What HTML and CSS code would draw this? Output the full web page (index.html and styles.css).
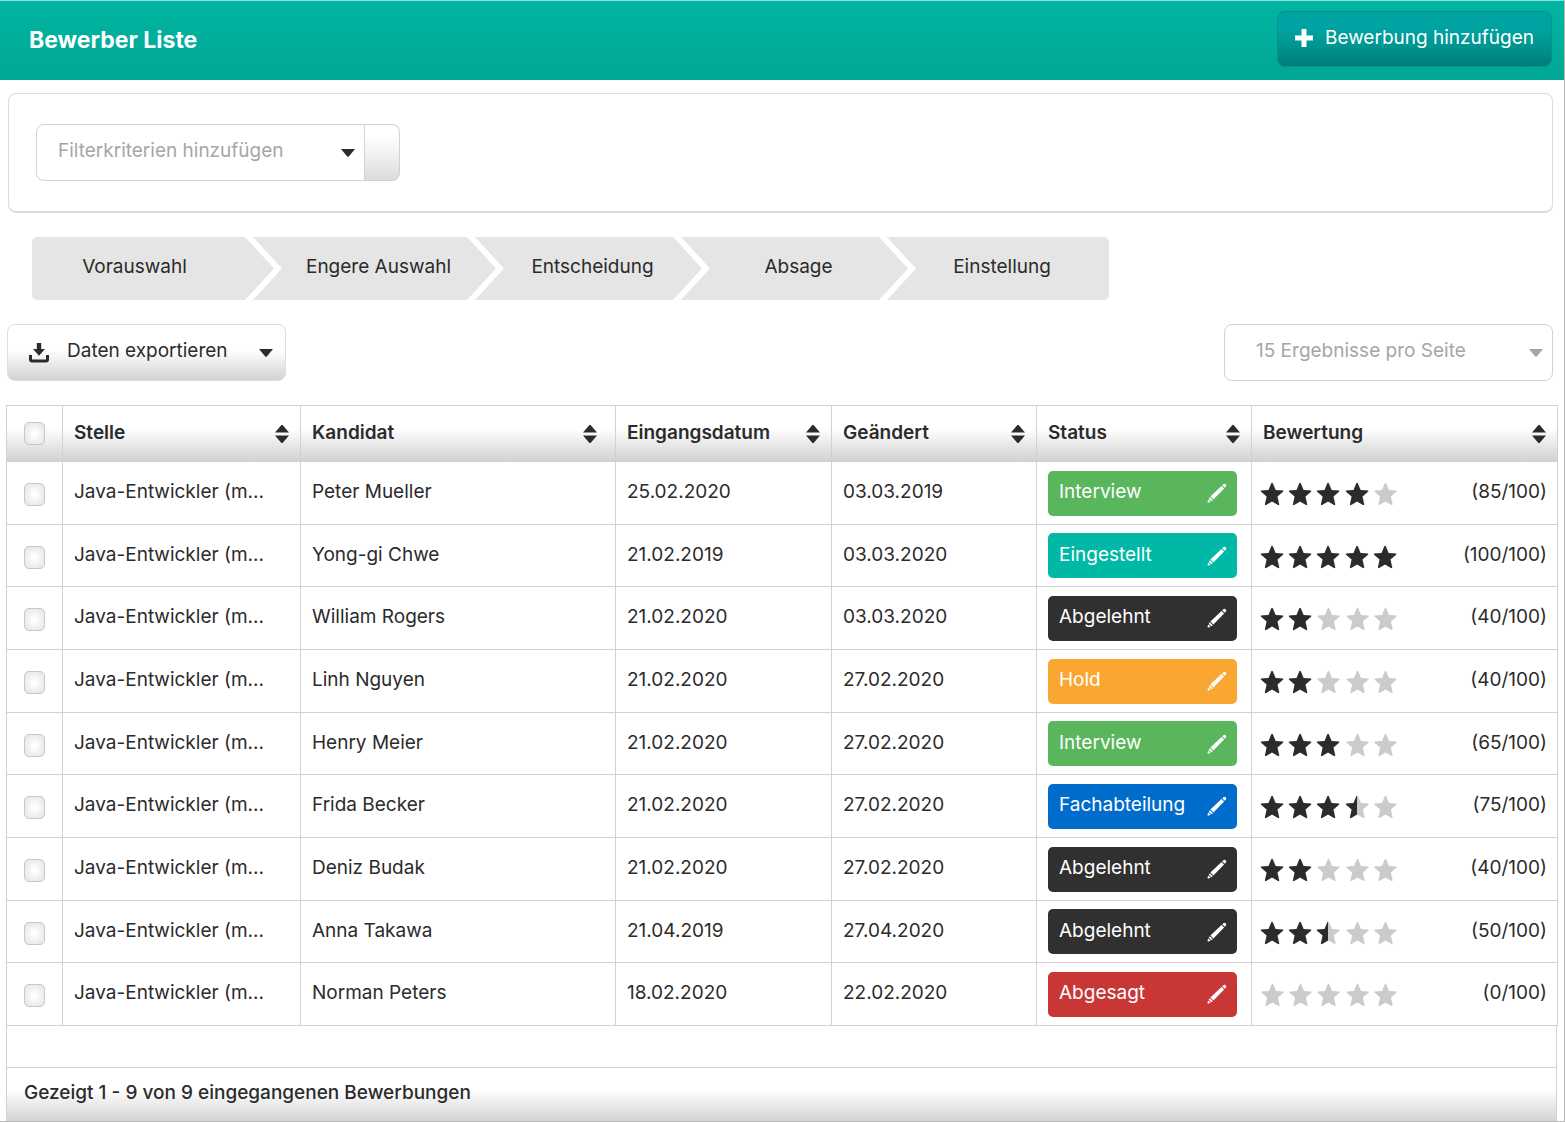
FILE: index.html
```html
<!DOCTYPE html>
<html lang="de">
<head>
<meta charset="utf-8">
<title>Bewerber Liste</title>
<link rel="stylesheet" href="styles.css">
</head>
<body>
<svg class="sprite" aria-hidden="true">
  <symbol id="caret" viewBox="0 0 14 8"><path d="M0 0H14L8 7.300Q7 8.300 6 7.300Z"/></symbol>
  <symbol id="sort" viewBox="0 0 14 20"><path d="M6.200 1.200Q7 .4 7.800 1.200L14 8.400H0ZM7.800 18.800Q7 19.600 6.200 18.800L0 11.600H14Z"/></symbol>
  <symbol id="pencil" viewBox="0 0 20 20"><path d="M15.200 2.200L16.800.9Q17.500.4 18.200 1L19 1.800Q19.600 2.500 19.100 3.200L17.800 4.800ZM14.500 2.900L17.100 5.500L6.400 16.600L3.400 13.600ZM2.800 14.200L5.800 17.200L4.300 18.300L1.700 15.700ZM1.300 16.400L3.600 18.700L1.600 19.500Q.3 19.700.5 18.400Z"/></symbol>
  <symbol id="stars" viewBox="0 0 136 24" overflow="visible">
    <g id="star"><path d="M11.300 1.200Q12 .3 12.700 1.200L15.500 7.900L22.600 8.500Q23.700 8.900 22.900 9.700L17.400 14.500L19.100 22.300Q19 23.500 18 23L12 19.400L6 23Q5 23.500 4.900 22.300L6.600 14.500L1.100 9.700Q.3 8.900 1.400 8.500L8.500 7.900Z"/></g>
    <use href="#star" x="28"/><use href="#star" x="56"/><use href="#star" x="85"/><use href="#star" x="113"/>
  </symbol>
</svg>

<header class="topbar">
  <h1 class="topbar-title">Bewerber Liste</h1>
  <button class="btn-primary" type="button">
    <svg class="icon-plus" viewBox="0 0 18 18" aria-hidden="true"><path d="M6.500 0H11.500V6.500H18V11.500H11.500V18H6.500V11.500H0V6.500H6.500Z"/></svg>
    Bewerbung hinzufügen
  </button>
</header>

<main class="page">
  <section class="filter-panel">
    <div class="filter">
      <div class="select-box filter-select">
        <select class="select" aria-label="Filterkriterien"><option>Filterkriterien hinzufügen</option></select>
        <svg class="caret select-caret" aria-hidden="true"><use href="#caret"/></svg>
      </div>
      <button class="filter-apply" type="button" aria-label="Filter anwenden"></button>
    </div>
  </section>

  <nav class="steps" aria-label="Bewerbungsphasen">
    <a class="step step-first" href="#">Vorauswahl</a>
    <a class="step" href="#">Engere Auswahl</a>
    <a class="step" href="#">Entscheidung</a>
    <a class="step" href="#">Absage</a>
    <a class="step step-last" href="#">Einstellung</a>
  </nav>

  <div class="toolbar">
    <button class="btn-export" type="button">
      <svg class="icon-download" viewBox="0 0 20 20" aria-hidden="true"><path d="M7.800 0H12.200V6H16L10 12.800L4 6H7.800Z"/><path d="M1.500 12V16.500Q1.500 18 3 18H17Q18.500 18 18.500 16.500V12" fill="none" stroke="currentColor" stroke-width="3"/></svg>
      <span class="btn-export-label">Daten exportieren</span>
      <svg class="caret" aria-hidden="true"><use href="#caret"/></svg>
    </button>
    <div class="select-box page-size">
      <select class="select" aria-label="Ergebnisse pro Seite"><option>15 Ergebnisse pro Seite</option></select>
      <svg class="caret select-caret" aria-hidden="true"><use href="#caret"/></svg>
    </div>
  </div>

  <table class="table">
    <colgroup>
      <col class="col-check"><col class="col-job"><col class="col-name"><col class="col-date"><col class="col-changed"><col class="col-status"><col class="col-rating">
    </colgroup>
    <thead>
      <tr>
        <th class="cell-check"><input class="check" type="checkbox" aria-label="Alle auswählen"></th>
        <th><button class="sort" type="button">Stelle<svg class="icon-sort" aria-hidden="true"><use href="#sort"/></svg></button></th>
        <th class="cell-name"><button class="sort" type="button">Kandidat<svg class="icon-sort" aria-hidden="true"><use href="#sort"/></svg></button></th>
        <th><button class="sort" type="button">Eingangsdatum<svg class="icon-sort" aria-hidden="true"><use href="#sort"/></svg></button></th>
        <th><button class="sort" type="button">Geändert<svg class="icon-sort" aria-hidden="true"><use href="#sort"/></svg></button></th>
        <th><button class="sort" type="button">Status<svg class="icon-sort" aria-hidden="true"><use href="#sort"/></svg></button></th>
        <th><button class="sort" type="button">Bewertung<svg class="icon-sort" aria-hidden="true"><use href="#sort"/></svg></button></th>
      </tr>
    </thead>
    <tbody>
      <tr>
        <td class="cell-check"><input class="check" type="checkbox" aria-label="Peter Mueller auswählen"></td>
        <td>Java-Entwickler (m...</td><td>Peter Mueller</td><td>25.02.2020</td><td>03.03.2019</td>
        <td><button class="status status-green" type="button">Interview<svg class="icon-pencil" aria-hidden="true"><use href="#pencil"/></svg></button></td>
        <td><div class="rating"><svg class="stars" aria-hidden="true"><use class="off" href="#stars"/><svg width="110"><use href="#stars" width="136" height="24"/></svg></svg><span>(85/100)</span></div></td>
      </tr>
      <tr>
        <td class="cell-check"><input class="check" type="checkbox" aria-label="Yong-gi Chwe auswählen"></td>
        <td>Java-Entwickler (m...</td><td>Yong-gi Chwe</td><td>21.02.2019</td><td>03.03.2020</td>
        <td><button class="status status-teal" type="button">Eingestellt<svg class="icon-pencil" aria-hidden="true"><use href="#pencil"/></svg></button></td>
        <td><div class="rating"><svg class="stars" aria-hidden="true"><use class="off" href="#stars"/><svg width="137"><use href="#stars" width="136" height="24"/></svg></svg><span>(100/100)</span></div></td>
      </tr>
      <tr>
        <td class="cell-check"><input class="check" type="checkbox" aria-label="William Rogers auswählen"></td>
        <td>Java-Entwickler (m...</td><td>William Rogers</td><td>21.02.2020</td><td>03.03.2020</td>
        <td><button class="status status-dark" type="button">Abgelehnt<svg class="icon-pencil" aria-hidden="true"><use href="#pencil"/></svg></button></td>
        <td><div class="rating"><svg class="stars" aria-hidden="true"><use class="off" href="#stars"/><svg width="54"><use href="#stars" width="136" height="24"/></svg></svg><span>(40/100)</span></div></td>
      </tr>
      <tr>
        <td class="cell-check"><input class="check" type="checkbox" aria-label="Linh Nguyen auswählen"></td>
        <td>Java-Entwickler (m...</td><td>Linh Nguyen</td><td>21.02.2020</td><td>27.02.2020</td>
        <td><button class="status status-orange" type="button">Hold<svg class="icon-pencil" aria-hidden="true"><use href="#pencil"/></svg></button></td>
        <td><div class="rating"><svg class="stars" aria-hidden="true"><use class="off" href="#stars"/><svg width="54"><use href="#stars" width="136" height="24"/></svg></svg><span>(40/100)</span></div></td>
      </tr>
      <tr>
        <td class="cell-check"><input class="check" type="checkbox" aria-label="Henry Meier auswählen"></td>
        <td>Java-Entwickler (m...</td><td>Henry Meier</td><td>21.02.2020</td><td>27.02.2020</td>
        <td><button class="status status-green" type="button">Interview<svg class="icon-pencil" aria-hidden="true"><use href="#pencil"/></svg></button></td>
        <td><div class="rating"><svg class="stars" aria-hidden="true"><use class="off" href="#stars"/><svg width="82"><use href="#stars" width="136" height="24"/></svg></svg><span>(65/100)</span></div></td>
      </tr>
      <tr>
        <td class="cell-check"><input class="check" type="checkbox" aria-label="Frida Becker auswählen"></td>
        <td>Java-Entwickler (m...</td><td>Frida Becker</td><td>21.02.2020</td><td>27.02.2020</td>
        <td><button class="status status-blue" type="button">Fachabteilung<svg class="icon-pencil" aria-hidden="true"><use href="#pencil"/></svg></button></td>
        <td><div class="rating"><svg class="stars" aria-hidden="true"><use class="off" href="#stars"/><svg width="97"><use href="#stars" width="136" height="24"/></svg></svg><span>(75/100)</span></div></td>
      </tr>
      <tr>
        <td class="cell-check"><input class="check" type="checkbox" aria-label="Deniz Budak auswählen"></td>
        <td>Java-Entwickler (m...</td><td>Deniz Budak</td><td>21.02.2020</td><td>27.02.2020</td>
        <td><button class="status status-dark" type="button">Abgelehnt<svg class="icon-pencil" aria-hidden="true"><use href="#pencil"/></svg></button></td>
        <td><div class="rating"><svg class="stars" aria-hidden="true"><use class="off" href="#stars"/><svg width="54"><use href="#stars" width="136" height="24"/></svg></svg><span>(40/100)</span></div></td>
      </tr>
      <tr>
        <td class="cell-check"><input class="check" type="checkbox" aria-label="Anna Takawa auswählen"></td>
        <td>Java-Entwickler (m...</td><td>Anna Takawa</td><td>21.04.2019</td><td>27.04.2020</td>
        <td><button class="status status-dark" type="button">Abgelehnt<svg class="icon-pencil" aria-hidden="true"><use href="#pencil"/></svg></button></td>
        <td><div class="rating"><svg class="stars" aria-hidden="true"><use class="off" href="#stars"/><svg width="68"><use href="#stars" width="136" height="24"/></svg></svg><span>(50/100)</span></div></td>
      </tr>
      <tr>
        <td class="cell-check"><input class="check" type="checkbox" aria-label="Norman Peters auswählen"></td>
        <td>Java-Entwickler (m...</td><td>Norman Peters</td><td>18.02.2020</td><td>22.02.2020</td>
        <td><button class="status status-red" type="button">Abgesagt<svg class="icon-pencil" aria-hidden="true"><use href="#pencil"/></svg></button></td>
        <td><div class="rating"><svg class="stars" aria-hidden="true"><use class="off" href="#stars"/></svg><span>(0/100)</span></div></td>
      </tr>
    </tbody>
  </table>
  <div class="table-foot">
    <p class="table-summary">Gezeigt 1 - 9 von 9 eingegangenen Bewerbungen</p>
  </div>
</main>
</body>
</html>
```
FILE: styles.css
```css
* { box-sizing: border-box; }

body {
  margin: 0;
  border-right: 1px solid #b8b8b8;
  border-bottom: 1px solid #b8b8b8;
  background: #fff;
  color: #2b2b2b;
  font-family: Inter, "Liberation Sans", sans-serif;
  font-size: 19px;
  line-height: 24px;
}

button, select { font: inherit; color: inherit; }
svg { fill: currentColor; flex: none; }
.sprite { position: absolute; width: 0; height: 0; }

/* Top bar */
.topbar {
  display: flex;
  justify-content: space-between;
  align-items: flex-start;
  height: 80px;
  padding: 10px 12px 0 29px;
  border-top: 1px solid #8fe0d6;
  background: linear-gradient(#00b5a2, #00a794);
  color: #fff;
}
.topbar-title { margin: 17px 0 0; font-size: 23px; line-height: 24px; font-weight: 700; }
.btn-primary {
  display: flex;
  align-items: center;
  gap: 12px;
  height: 56px;
  padding: 0 17px 2px;
  border: 1px solid #009490;
  border-radius: 8px;
  background: linear-gradient(#00a3a1 30%, #009490 65%, #007c78);
}
.icon-plus { width: 18px; height: 18px; }

.page { padding: 13px 7px 0 6px; }

/* Filter */
.filter-panel {
  margin: 0 4px 0 2px;
  padding: 30px 27px;
  border: 2px solid #dcdcdc;
  border-width: 1px 1px 2px;
  border-radius: 8px;
}
.filter { display: flex; width: 364px; }
.select-box { position: relative; }
.filter-select { flex: 1; }
.select {
  display: block;
  width: 100%;
  height: 57px;
  padding: 0 21px 3px;
  border: 1px solid #d2d2d2;
  border-radius: 8px;
  background: #fff;
  color: #a6a6a6;
  appearance: none;
}
.filter-select .select { border-radius: 8px 0 0 8px; }
.filter-select .caret { right: 10px; }
.filter-apply {
  width: 35px;
  border: 1px solid #d2d2d2;
  border-left: 0;
  border-radius: 0 8px 8px 0;
  background: linear-gradient(#fff 20%, #dcdcdc);
}
.caret { width: 14px; height: 8px; }
.select-caret { position: absolute; top: 25px; right: 10px; pointer-events: none; }

/* Phases */
.steps { display: flex; margin: 24px 0 0 26px; }
.step {
  display: flex;
  justify-content: center;
  width: 227px;
  margin-left: -21px;
  padding: 18px 0 21px 8px;
  background: #e5e5e5;
  clip-path: polygon(0 0, calc(100% - 29px) 0, 100% 50%, calc(100% - 29px) 100%, 0 100%, 29px 50%);
  color: inherit;
  text-decoration: none;
}
.step:nth-child(2) { width: 243px; }
.step-first {
  width: 242px;
  margin-left: 0;
  padding: 18px 37px 21px 0;
  border-radius: 5px 0 0 5px;
  clip-path: polygon(0 0, calc(100% - 29px) 0, 100% 50%, calc(100% - 29px) 100%, 0 100%);
}
.step-last {
  width: 222px;
  border-radius: 0 5px 5px 0;
  clip-path: polygon(0 0, 100% 0, 100% 100%, 0 100%, 29px 50%);
}

/* Toolbar */
.toolbar {
  display: flex;
  justify-content: space-between;
  margin: 24px 4px 24px 1px;
}
.btn-export {
  display: flex;
  align-items: center;
  width: 279px;
  height: 57px;
  padding: 0 12px 0 21px;
  border: 1px solid #dedede;
  border-radius: 8px;
  background: linear-gradient(#fff 45%, #d2d2d2);
}
.btn-export-label { flex: 1; padding: 0 0 3px 18px; text-align: left; }
.icon-download { width: 20px; height: 20px; }
.page-size { width: 329px; color: #a6a6a6; }
.page-size .select { padding-left: 31px; }

/* Table */
.table {
  width: 100%;
  border-collapse: collapse;
  table-layout: fixed;
}
.col-check { width: 56px; }
.col-job { width: 238px; }
.col-name { width: 315px; }
.col-date { width: 216px; }
.col-changed { width: 205px; }
.col-status { width: 215px; }
.col-rating { width: 306px; }
.table th, .table td {
  padding: 0 11px 2px;
  border: 1px solid #d2d2d2;
  text-align: left;
  white-space: nowrap;
}
.table thead tr { height: 56px; background: linear-gradient(#fff 40%, #d0d0d0); }
.table tbody tr { height: 63px; }
.table tbody tr:nth-child(3n + 2) { height: 62px; }
.table .cell-name { padding-right: 18px; }
.sort {
  display: flex;
  justify-content: space-between;
  align-items: center;
  width: 100%;
  padding: 0;
  border: 0;
  background: none;
  font-weight: 600;
}
.icon-sort { width: 14px; height: 20px; margin-top: 2px; }
.table .cell-check { padding: 0 0 0 17px; }
.check {
  display: block;
  width: 21px;
  height: 23px;
  margin: 0;
  border: 1px solid #c8c8c8;
  border-radius: 5px;
  background: radial-gradient(#fff 10%, #e2e2e2);
  appearance: none;
}
.table tbody .check { margin-top: 3px; }
.status {
  display: flex;
  justify-content: space-between;
  align-items: center;
  width: 100%;
  max-width: 189px;
  height: 45px;
  padding: 0 10px 2px 11px;
  border: 0;
  border-radius: 5px;
  color: #fff;
}
.icon-pencil { width: 20px; height: 20px; margin-top: 2px; }
.status-green { background: #5ab65c; }
.status-teal { background: #00b8a6; }
.status-dark { background: #303030; }
.status-orange { background: #faa732; }
.status-blue { background: #006dcc; }
.status-red { background: #c83736; }
.table td:last-child { padding: 0 10px 2px 8px; }
.table td:nth-child(6) { padding-bottom: 0; }
.rating { display: flex; justify-content: space-between; align-items: center; }
.stars { width: 137px; height: 24px; margin-top: 4px; }
.stars .off { color: #cbcbcb; width: 136px; height: 24px; }

.table-foot {
  padding-top: 41px;
  border: 1px solid #d2d2d2;
  border-width: 0 1px;
}
.table-summary {
  margin: 0;
  padding: 13px 17px 16px;
  border-top: 1px solid #d2d2d2;
  background: linear-gradient(#fff 40%, #d4d4d4);
  font-weight: 500;
}
```
